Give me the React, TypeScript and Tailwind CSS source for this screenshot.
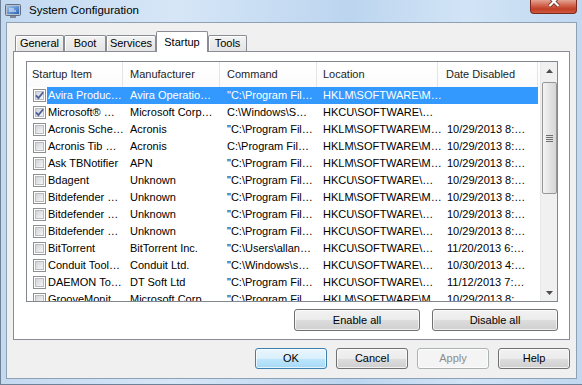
import React from "react";

type Row = {
  on: boolean;
  item: string;
  mfr: string;
  cmd: string;
  loc: string;
  date: string;
};

const rows: Row[] = [
  { on: true, item: "Avira Produc…", mfr: "Avira Operatio…", cmd: "\"C:\\Program Fil…", loc: "HKLM\\SOFTWARE\\M…", date: "" },
  { on: true, item: "Microsoft® …", mfr: "Microsoft Corp…", cmd: "C:\\Windows\\S…", loc: "HKCU\\SOFTWARE\\…", date: "" },
  { on: false, item: "Acronis Sche…", mfr: "Acronis", cmd: "\"C:\\Program Fil…", loc: "HKLM\\SOFTWARE\\M…", date: "10/29/2013 8:…" },
  { on: false, item: "Acronis Tib …", mfr: "Acronis", cmd: "C:\\Program Fil…", loc: "HKLM\\SOFTWARE\\M…", date: "10/29/2013 8:…" },
  { on: false, item: "Ask TBNotifier", mfr: "APN", cmd: "\"C:\\Program Fil…", loc: "HKLM\\SOFTWARE\\M…", date: "10/29/2013 8:…" },
  { on: false, item: "Bdagent", mfr: "Unknown", cmd: "\"C:\\Program Fil…", loc: "HKCU\\SOFTWARE\\…", date: "10/29/2013 8:…" },
  { on: false, item: "Bitdefender …", mfr: "Unknown", cmd: "\"C:\\Program Fil…", loc: "HKLM\\SOFTWARE\\M…", date: "10/29/2013 8:…" },
  { on: false, item: "Bitdefender …", mfr: "Unknown", cmd: "\"C:\\Program Fil…", loc: "HKCU\\SOFTWARE\\…", date: "10/29/2013 8:…" },
  { on: false, item: "Bitdefender …", mfr: "Unknown", cmd: "\"C:\\Program Fil…", loc: "HKCU\\SOFTWARE\\…", date: "10/29/2013 8:…" },
  { on: false, item: "BitTorrent", mfr: "BitTorrent Inc.", cmd: "\"C:\\Users\\allan…", loc: "HKCU\\SOFTWARE\\…", date: "11/20/2013 6:…" },
  { on: false, item: "Conduit Tool…", mfr: "Conduit Ltd.", cmd: "\"C:\\Windows\\s…", loc: "HKCU\\SOFTWARE\\…", date: "10/30/2013 4:…" },
  { on: false, item: "DAEMON To…", mfr: "DT Soft Ltd", cmd: "\"C:\\Program Fil…", loc: "HKCU\\SOFTWARE\\…", date: "11/12/2013 7:…" },
  { on: false, item: "GrooveMonit…", mfr: "Microsoft Corp…", cmd: "\"C:\\Program Fil…", loc: "HKLM\\SOFTWARE\\M…", date: "10/29/2013 8:…" },
];

const headers = [
  { label: "Startup Item", cls: "w-[96px] pl-[5px]" },
  { label: "Manufacturer", cls: "w-[97px] pl-[7px]" },
  { label: "Command", cls: "w-[97px] pl-[7px]" },
  { label: "Location", cls: "w-[121px] pl-[6px]" },
  { label: "Date Disabled", cls: "w-[100px] pl-[8px]" },
];

const tabs = [
  { label: "General", w: "w-[49px]" },
  { label: "Boot", w: "w-[42px]" },
  { label: "Services", w: "w-[50px]" },
  { label: "Startup", w: "w-[52px]", active: true },
  { label: "Tools", w: "w-[39px]" },
];

function Checkbox({ on }: { on: boolean }) {
  return (
    <svg width="13" height="13" viewBox="0 0 13 13">
      <defs>
        <linearGradient id="cbg" x1="0" y1="0" x2="1" y2="1">
          <stop offset="0" stopColor="#cfd2d6" />
          <stop offset="1" stopColor="#f7f7f7" />
        </linearGradient>
      </defs>
      <rect x="0.5" y="0.5" width="12" height="12" fill="#fff" stroke="#8e8f8f" />
      <rect x="2.5" y="2.5" width="8" height="8" fill="url(#cbg)" stroke="#b8bcc2" />
      {on && (
        <path d="M3 6.3 L5.4 9 L10.2 3.2" fill="none" stroke="#4a5f9c" strokeWidth="1.8" />
      )}
    </svg>
  );
}

function Btn({
  label,
  w,
  kind = "normal",
}: {
  label: string;
  w: string;
  kind?: "normal" | "default" | "disabled";
}) {
  const look =
    kind === "default"
      ? "border-[#3c7fb1] bg-[linear-gradient(to_bottom,#eaf6fd_0%,#d9f0fc_50%,#bee6fd_51%,#a7d9f5_100%)] text-black"
      : kind === "disabled"
        ? "border-[#adb2b5] bg-[#f4f4f4] text-[#8d8d8d]"
        : "border-[#707070] bg-[linear-gradient(to_bottom,#f2f2f2_0%,#ebebeb_50%,#dddddd_51%,#cfcfcf_100%)] text-black";
  return (
    <div
      className={`${w} h-full rounded-[3px] border ${look} shadow-[inset_0_0_0_1px_rgba(255,255,255,0.7)] flex items-center justify-center`}
    >
      {label}
    </div>
  );
}

function TitleIcon() {
  return (
    <svg width="16" height="15" viewBox="0 0 16 15">
      <defs>
        <linearGradient id="scr" x1="0" y1="0" x2="1" y2="1">
          <stop offset="0" stopColor="#9cc4ee" />
          <stop offset="1" stopColor="#2f63b5" />
        </linearGradient>
      </defs>
      <rect x="0.5" y="0.5" width="15" height="11" rx="1" fill="#b9c3cf" stroke="#5f6f84" />
      <rect x="2" y="2" width="12" height="8" fill="url(#scr)" />
      <path d="M4 5 h5 M4 7 h7" stroke="#e8f1fb" strokeWidth="1" />
      <rect x="5" y="12" width="6" height="2" fill="#7d8899" />
    </svg>
  );
}

function Scrollbar() {
  return (
    <div className="w-[17px] h-full bg-[#f0f0f0] border-l border-[#e8e8e8] flex flex-col items-center">
      <div className="h-[17px] w-full flex items-center justify-center">
        <svg width="7" height="4" viewBox="0 0 7 4">
          <path d="M0 4 L3.5 0 L7 4 Z" fill="#4d4d4d" />
        </svg>
      </div>
      <div className="mt-[3px] w-[15px] h-[112px] rounded-[2px] border border-[#979797] bg-[linear-gradient(to_right,#f4f4f4,#e4e4e4_50%,#d6d6d6)] flex flex-col items-center justify-center gap-[1px]">
        <div className="w-[7px] h-px bg-[#6f6f6f]" />
        <div className="w-[7px] h-px bg-[#6f6f6f]" />
        <div className="w-[7px] h-px bg-[#6f6f6f]" />
        <div className="w-[7px] h-px bg-[#6f6f6f]" />
      </div>
      <div className="flex-1" />
      <div className="h-[17px] w-full flex items-center justify-center">
        <svg width="7" height="4" viewBox="0 0 7 4">
          <path d="M0 0 L3.5 4 L7 0 Z" fill="#4d4d4d" />
        </svg>
      </div>
    </div>
  );
}

export default function App() {
  return (
    <div className="w-[582px] h-[385px] overflow-hidden flex flex-col bg-[linear-gradient(to_right,#c3d9f0,#d6e6f7_30%,#bcd5ef_60%,#d2e4f6_80%,#c1d8f0)] border-l border-b border-[#6f8196] font-['Liberation_Sans',Arial,sans-serif] text-[11px] text-black">
      {/* title bar */}
      <div className="h-[22px] flex items-center pl-[4px]">
        <TitleIcon />
        <span className="ml-[8px] text-[11.5px] text-black">System Configuration</span>
        <div className="flex-1" />
        <div className="self-start mr-[5px] w-[47px] h-[14px] rounded-b-[4px] border border-t-0 border-[#7a2a1e] bg-[linear-gradient(to_bottom,#e4a292,#cf5f47_45%,#c13f27_70%,#d0583c)] overflow-hidden flex justify-center">
          <svg width="14" height="10" viewBox="0 0 14 10">
            <path d="M2.5 -3 L11.5 6 M11.5 -3 L2.5 6" stroke="#5a1d14" strokeWidth="3.6" />
            <path d="M2.5 -3 L11.5 6 M11.5 -3 L2.5 6" stroke="#ffffff" strokeWidth="2.2" />
          </svg>
        </div>
      </div>

      {/* client area */}
      <div className="mx-[5px] h-[357px] border border-[#8fa1b5] bg-[#f0f0f0] flex flex-col">
        {/* tabs */}
        <div className="h-[28px] pl-[8px] flex items-end">
          {tabs.map((t) =>
            t.active ? (
              <div
                key={t.label}
                className={`${t.w} h-[21px] -mb-px relative z-10 bg-white border border-b-0 border-[#898c95] rounded-t-[2px] flex items-center justify-center`}
              >
                {t.label}
              </div>
            ) : (
              <div
                key={t.label}
                className={`${t.w} h-[16px] border border-b-0 border-[#898c95] rounded-t-[2px] bg-[linear-gradient(to_bottom,#f3f3f3,#e4e4e4)] shadow-[inset_1px_1px_0_#ffffff] flex items-center justify-center`}
              >
                {t.label}
              </div>
            ),
          )}
        </div>

        {/* tab panel */}
        <div className="ml-[6px] mr-[6px] h-[289px] border border-[#898c95] bg-white flex flex-col">
          <div className="ml-[12px] mt-[9px] w-[532px] h-[241px] border border-[#828790] bg-white flex">
            <div className="flex-1 h-full overflow-hidden flex flex-col">
              <div className="h-[25px] shrink-0 flex bg-[linear-gradient(to_bottom,#ffffff,#fbfbfc)]">
                {headers.map((h) => (
                  <div
                    key={h.label}
                    className={`${h.cls} shrink-0 h-full border-r border-[#e5e5e5] flex items-center whitespace-nowrap text-[#1e1e1e]`}
                  >
                    {h.label}
                  </div>
                ))}
              </div>
              {rows.map((r, i) => {
                const sel = i === 0;
                return (
                  <div key={i} className="h-[17px] shrink-0 flex whitespace-nowrap">
                    <div className="w-[20px] shrink-0 pl-[6px] flex items-center">
                      <Checkbox on={r.on} />
                    </div>
                    <div className={`flex ${sel ? "bg-[#3399ff] text-white" : ""}`}>
                      <div className="w-[76px] shrink-0 pl-[1px] flex items-center">{r.item}</div>
                      <div className="w-[97px] shrink-0 pl-[7px] flex items-center">{r.mfr}</div>
                      <div className="w-[97px] shrink-0 pl-[7px] flex items-center">{r.cmd}</div>
                      <div className="w-[121px] shrink-0 pl-[6px] flex items-center">{r.loc}</div>
                      <div className="w-[100px] shrink-0 pl-[9px] flex items-center">{r.date}</div>
                    </div>
                  </div>
                );
              })}
            </div>
            <Scrollbar />
          </div>
          <div className="mt-[7px] h-[22px] pr-[11px] flex justify-end gap-[12px]">
            <Btn label="Enable all" w="w-[126px]" />
            <Btn label="Disable all" w="w-[126px]" />
          </div>
        </div>

        {/* dialog buttons */}
        <div className="mt-[8px] h-[21px] pr-[6px] flex justify-end gap-[9px]">
          <Btn label="OK" w="w-[72px]" kind="default" />
          <Btn label="Cancel" w="w-[72px]" />
          <Btn label="Apply" w="w-[72px]" kind="disabled" />
          <Btn label="Help" w="w-[72px]" />
        </div>
      </div>
    </div>
  );
}
